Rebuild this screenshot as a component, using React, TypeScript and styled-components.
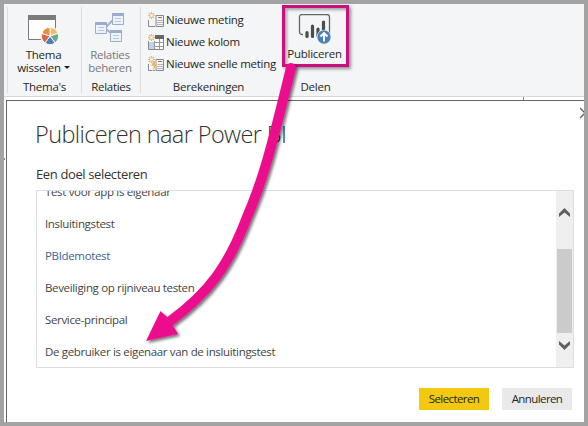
import React from "react";
import styled, { createGlobalStyle } from "styled-components";

const GlobalStyle = createGlobalStyle`
  * { box-sizing: border-box; }
  html, body { margin: 0; padding: 0; overflow: hidden; }
  body { font-family: "Open Sans", "Noto Sans", sans-serif; font-size: 11.5px; color: #262626; }
`;

const Frame = styled.div`
  position: relative;
  display: flex;
  flex-direction: column;
  width: 588px;
  height: 426px;
  border: 4px solid #a3a3a3;
  background: #fff;
  overflow: hidden;
`;

const Ribbon = styled.header`
  display: flex;
  flex: none;
  height: 93px;
  padding: 3px 0 3px 3px;
  background: #f4f5f7;
  border-bottom: 1px solid #d9d9d9;
`;

const Group = styled.section<{ $width: number; $plain?: boolean }>`
  display: flex;
  flex-direction: column;
  align-items: center;
  width: ${(p) => p.$width}px;
  height: 86px;
  margin-left: ${(p) => (p.$plain ? 6 : 0)}px;
  border-left: 1px solid ${(p) => (p.$plain ? "transparent" : "#dcdddf")};
`;

const GroupBody = styled.div`
  flex: none;
  width: 100%;
  height: 72px;
`;

const Label = styled.span<{ $track?: number }>`
  letter-spacing: ${(p) => p.$track ?? -0.25}px;
  line-height: 16px;
  white-space: nowrap;
`;

const BigButton = styled.div<{ $top: number; $gap: number; $muted?: boolean }>`
  display: flex;
  flex-direction: column;
  align-items: center;
  padding: ${(p) => p.$top}px 2px 0 0;
  color: ${(p) => (p.$muted ? "#777" : "#262626")};
  > svg { display: block; flex: none; margin-bottom: ${(p) => p.$gap}px; }
  ${Label} { line-height: 13px; }
`;

const WithCaret = styled.span`
  display: flex;
  align-items: center;
  gap: 3px;
`;

const Caret = styled.i`
  border: 3px solid transparent;
  border-top-color: #222;
  border-bottom: 0;
`;

const MeasureList = styled.div`
  display: flex;
  flex-direction: column;
  padding: 2px 0 0 7px;
`;

const MeasureRow = styled.div`
  display: flex;
  align-items: center;
  gap: 2px;
  height: 22px;
  svg { flex: none; }
`;

const Highlight = styled.div`
  width: 67px;
  height: 62px;
  margin: -2px 0 0 -1px;
  border: 3px solid #c9107f;
  box-shadow: 2px 2px 3px #0006, inset 2px 2px 3px #0005;
`;

const Dialog = styled.main`
  flex: 1;
  display: flex;
  flex-direction: column;
  margin: 3px 0 0 2px;
  padding: 20px 10px 0 29px;
  border: solid #666;
  border-width: 1px 0 0 1px;
`;

const Title = styled.h1`
  margin: 0;
  height: 27px;
  font-size: 23.5px;
  font-weight: 300;
  line-height: 26px;
  letter-spacing: -0.6px;
  text-indent: -1px;
  white-space: nowrap;
  color: #333;
`;

const Prompt = styled.h2`
  margin: 17px 0 7px;
  font-size: 13px;
  font-weight: 400;
  line-height: 18px;
  letter-spacing: -0.37px;
  color: #333;
`;

const ListBox = styled.div`
  display: flex;
  flex: none;
  height: 178px;
  border: 1px solid #dedede;
`;

const Items = styled.ul`
  display: flex;
  flex-direction: column;
  justify-content: flex-end;
  flex: 1;
  margin: 0;
  padding: 0 0 0 8px;
  list-style: none;
  overflow: hidden;
`;

const Item = styled.li<{ $active?: boolean }>`
  flex: none;
  height: 32px;
  line-height: 34px;
  letter-spacing: -0.34px;
  color: ${(p) => (p.$active ? "#3f6294" : "#444")};
  white-space: nowrap;
`;

const Scrollbar = styled.div`
  display: flex;
  flex-direction: column;
  width: 17px;
  padding: 17px 1px 0;
  background: #efefef;
  svg { display: block; margin-left: 2px; }
`;

const Thumb = styled.div`
  height: 84px;
  margin: 32px 0 8px;
  background: #cbcbcb;
`;

const Actions = styled.footer`
  display: flex;
  justify-content: flex-end;
  gap: 13px;
  padding: 20px 2px 0 0;
`;

const Button = styled.button<{ $primary?: boolean }>`
  width: 70px;
  height: 22px;
  padding: 0;
  border: 0;
  background: ${(p) => (p.$primary ? "#f2c811" : "#e9e9e9")};
  color: #262626;
  font: 11.5px/22px "Open Sans", "Noto Sans", sans-serif;
  letter-spacing: -0.6px;
`;

const CloseMark = styled.svg`
  position: absolute;
  left: 576px;
  top: 103px;
`;

const Tick = styled.i<{ $x: number; $y: number; $w: number; $h: number }>`
  position: absolute;
  left: ${(p) => p.$x}px;
  top: ${(p) => p.$y}px;
  width: ${(p) => p.$w}px;
  height: ${(p) => p.$h}px;
  background: #888;
`;

const ArrowOverlay = styled.svg`
  position: absolute;
  left: -4px;
  top: -4px;
  pointer-events: none;
`;

const ThemeIcon = () => (
  <svg width="31" height="30" viewBox="0 0 31 30">
    <path d="M.5 1.5h27v23H.5z" fill="#fff" stroke="#7b7b7b" />
    <path d="M0 0h28v5H0z" fill="#7b7b7b" />
    <circle cx="22" cy="21" r="9.5" fill="#f4f5f7" />
    <g stroke="#fff" strokeWidth=".9">
      <path d="M22 21V12.500a8.500 8.500 0 0 1 8.080 5.870z" fill="#e8c070" />
      <path d="M22 21l8.080-2.630a8.500 8.500 0 0 1-3.080 9.510z" fill="#70a590" />
      <path d="M22 21l5 6.880a8.500 8.500 0 0 1-10 0z" fill="#4a80b8" />
      <path d="M22 21l-5 6.880a8.500 8.500 0 0 1-3.080-9.510z" fill="#d96545" />
      <path d="M22 21l-8.080-2.630A8.500 8.500 0 0 1 22 12.500z" fill="#e68f3e" />
    </g>
  </svg>
);

const RelationsIcon = () => (
  <svg width="30" height="30" viewBox="0 0 30 30">
    <path d="M11 14l7-7M11 16l6 5" fill="none" stroke="#a4b0c5" strokeWidth="2" />
    {[[0, 9], [17, 0], [15, 17]].map(([x, y]) => (
      <g key={y} transform={`translate(${x} ${y})`}>
        <path d="M.5.5h11v11H.5z" fill="#edf3fc" stroke="#9daccc" />
        <path d="M0 0h12v3H0z" fill="#9daccc" />
        <path d="M3 5.500h6M3 8.500h6" stroke="#b7c8e5" />
      </g>
    ))}
  </svg>
);

const Spark = () => (
  <g stroke="#e5b96f" strokeWidth="1.1">
    <path d="M3.500 0v7M0 3.500h7M1 1l5 5M6 1L1 6" />
    <circle cx="3.500" cy="3.500" r="1.300" fill="#fff" stroke="none" />
  </g>
);

const Calculator = () => (
  <g>
    <path d="M.5 8v6.500H7M8 3.500h7.500v11h-7.500z" fill="none" stroke="#888" />
    <path d="M10 5.500h4" stroke="#777" />
    <path d="M9.500 8.500h5M9.500 10.500h5M9.500 12.500h5" stroke="#777" strokeDasharray="1 1" />
  </g>
);

const MeasureIcon = ({ kind }: { kind: "measure" | "column" | "quick" }) => (
  <svg width="16" height="16" viewBox="0 0 16 16">
    {kind === "column" ? (
      <g>
        <path d="M.5 4.500h15v11H.5z" fill="#fff" stroke="#888" />
        <path d="M1 8h5v7H1z" fill="#b7d5ef" />
        <path d="M7 1h9v4H7z" fill="#666" />
        <path d="M6.500 5v10M11.500 5v10M6 8.500h9M6 12.500h9" stroke="#999" />
        <path d="M0 0h7v7H0z" fill="#f4f5f7" />
      </g>
    ) : (
      <Calculator />
    )}
    {kind === "quick" && <path d="M5 5h4L7.500 8H10l-5.500 7 1-5H3z" fill="#e8b45f" stroke="#f4f5f7" strokeWidth=".4" />}
    <Spark />
  </svg>
);

const PublishIcon = () => (
  <svg width="34" height="31" viewBox="0 0 34 31">
    <path d="M5 20.500H4Q1.500 20.500 1.500 18V3Q1.500.500 4 .500h25Q31.500.500 31.500 3v16" fill="none" stroke="#666" strokeWidth="1.300" />
    <path d="M9 18.500v4M14.500 12v10.500M20 15v7M25.500 8v12" stroke="#4c4c4c" strokeWidth="3.200" strokeLinecap="round" />
    <circle cx="26" cy="23" r="7.300" fill="#f4f5f7" />
    <circle cx="26" cy="23" r="6.700" fill="#4b80bb" />
    <path d="M26 27.500v-8M22.500 22.500l3.500-3.500 3.500 3.500" fill="none" stroke="#fff" strokeWidth="1.900" />
  </svg>
);

const targets = [
  { text: "Test voor app is eigenaar" },
  { text: "Insluitingstest" },
  { text: "PBIdemotest", active: true },
  { text: "Beveiliging op rijniveau testen" },
  { text: "Service-principal" },
  { text: "De gebruiker is eigenaar van de insluitingstest" },
];

export default function App() {
  return (
    <>
      <GlobalStyle />
      <Frame>
        <Ribbon>
          <Group $width={74}>
            <GroupBody>
              <BigButton $top={8} $gap={3}>
                <ThemeIcon />
                <Label>Thema</Label>
                <WithCaret><Label>wisselen</Label><Caret /></WithCaret>
              </BigButton>
            </GroupBody>
            <Label>Thema's</Label>
          </Group>
          <Group $width={59}>
            <GroupBody>
              <BigButton $top={6} $gap={5} $muted>
                <RelationsIcon />
                <Label $track={-0.3}>Relaties</Label>
                <Label>beheren</Label>
              </BigButton>
            </GroupBody>
            <Label $track={-0.3}>Relaties</Label>
          </Group>
          <Group $width={136}>
            <GroupBody>
              <MeasureList>
                <MeasureRow><MeasureIcon kind="measure" /><Label>Nieuwe meting</Label></MeasureRow>
                <MeasureRow><MeasureIcon kind="column" /><Label>Nieuwe kolom</Label></MeasureRow>
                <MeasureRow><MeasureIcon kind="quick" /><Label>Nieuwe snelle meting</Label></MeasureRow>
              </MeasureList>
            </GroupBody>
            <Label>Berekeningen</Label>
          </Group>
          <Group $width={66} $plain>
            <GroupBody>
              <Highlight>
                <BigButton $top={6} $gap={2}>
                  <PublishIcon />
                  <Label>Publiceren</Label>
                </BigButton>
              </Highlight>
            </GroupBody>
            <Label>Delen</Label>
          </Group>
        </Ribbon>
        <Dialog>
          <Title>Publiceren naar Power BI</Title>
          <Prompt>Een doel selecteren</Prompt>
          <ListBox>
            <Items>
              {targets.map((t) => (
                <Item key={t.text} $active={t.active}>{t.text}</Item>
              ))}
            </Items>
            <Scrollbar>
              <svg width="11" height="9" viewBox="0 0 11 9"><path d="M0 9V5.500L5.500 0 11 5.500V9L5.500 4.500z" fill="#606060" /></svg>
              <Thumb />
              <svg width="11" height="9" viewBox="0 0 11 9"><path d="M0 0v3.500L5.500 9 11 3.500V0L5.500 4.500z" fill="#606060" /></svg>
            </Scrollbar>
          </ListBox>
          <Actions>
            <Button $primary>Selecteren</Button>
            <Button>Annuleren</Button>
          </Actions>
        </Dialog>
        <CloseMark width="11" height="12" viewBox="0 0 11 12"><path d="M0 1l10 10M0 11L10 1" stroke="#666" strokeWidth="1.500" /></CloseMark>
        <Tick $x={519} $y={93} $w={1} $h={3} />
        <Tick $x={0} $y={154} $w={1} $h={2} />
        <ArrowOverlay width="588" height="426" viewBox="0 0 588 426">
          <defs>
            <filter id="shadow" x="-20%" y="-20%" width="140%" height="140%">
              <feDropShadow dx="2" dy="2" stdDeviation="1.800" floodOpacity=".55" />
            </filter>
          </defs>
          <g filter="url(#shadow)">
            <path d="M291 68C274 136 265 176 247 217C229 265 209 293 169 322" fill="none" stroke="#ec0b8d" strokeWidth="10" strokeLinecap="round" />
            <path d="M146 341L160.500 311L168 318L178 334z" fill="#ec0b8d" />
          </g>
        </ArrowOverlay>
      </Frame>
    </>
  );
}
